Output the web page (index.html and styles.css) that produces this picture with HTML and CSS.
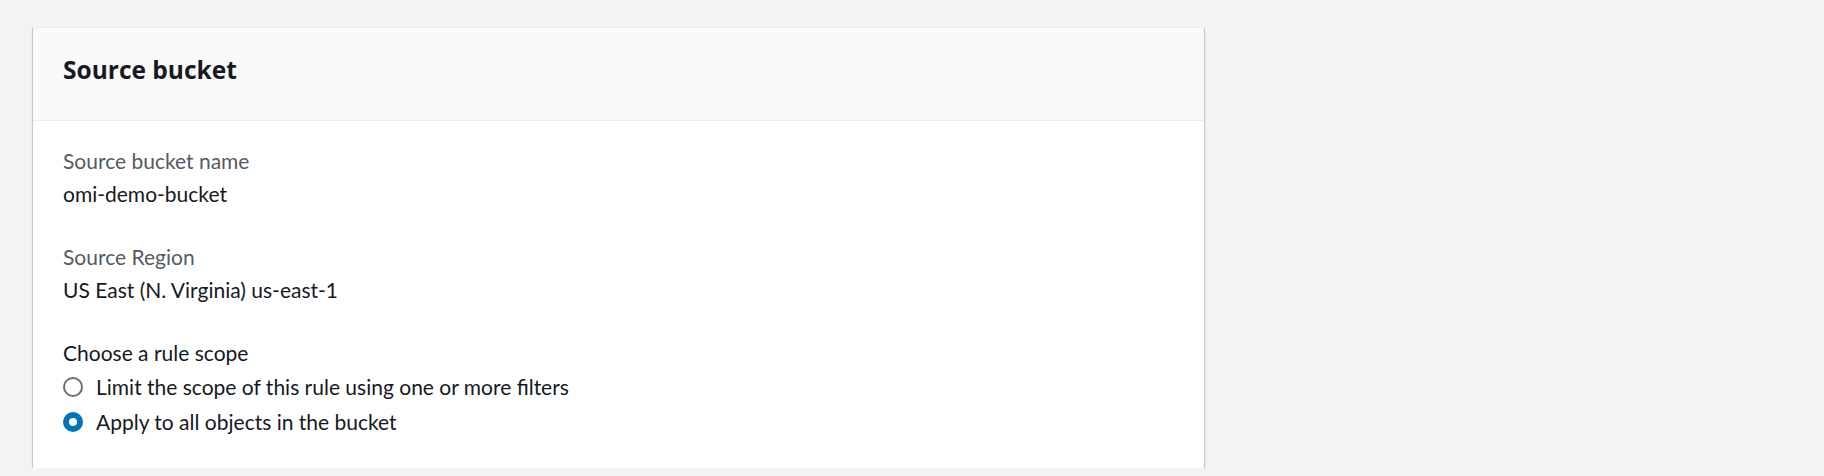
FILE: index.html
```html
<!DOCTYPE html>
<html lang="en">
<head>
<meta charset="utf-8">
<title>Source bucket</title>
<link rel="stylesheet" href="styles.css">
</head>
<body>
<main class="page">
  <section class="card">
    <header class="card-header">
      <h2 class="card-title">Source bucket</h2>
    </header>
    <div class="card-body">
      <div class="field">
        <div class="field-label">Source bucket name</div>
        <div class="field-value">omi-demo-bucket</div>
      </div>
      <div class="field">
        <div class="field-label">Source Region</div>
        <div class="field-value">US East (N. Virginia) us-east-1</div>
      </div>
      <fieldset class="scope">
        <legend class="scope-label">Choose a rule scope</legend>
        <label class="radio-row">
          <span class="radio"></span>
          <span class="radio-text">Limit the scope of this rule using one or more filters</span>
        </label>
        <label class="radio-row">
          <span class="radio radio-checked"></span>
          <span class="radio-text">Apply to all objects in the bucket</span>
        </label>
      </fieldset>
    </div>
  </section>
</main>
</body>
</html>
```

FILE: styles.css
```css
html, body {
  margin: 0;
  padding: 0;
  background: #f2f3f3;
}

body {
  font-family: "Lato", "Open Sans", sans-serif;
  color: #16191f;
}

.page {
  padding: 27px 0 0 33px;
}

.card {
  width: 1171px;
  background: #ffffff;
  box-shadow: 0 1px 1px 0 rgba(0, 28, 36, 0.3), 1px 1px 1px 0 rgba(0, 28, 36, 0.15), -1px 1px 1px 0 rgba(0, 28, 36, 0.15);
  border-top: 1px solid #eaeded;
}

.card-header {
  background: #fafafa;
  border-bottom: 1px solid #eaeded;
  padding: 27px 30px 35px 30px;
}

.card-title {
  margin: 0;
  font-family: "Open Sans", "Lato", sans-serif;
  font-size: 24.5px;
  line-height: 30px;
  font-weight: 700;
  color: #16191f;
}

.card-body {
  padding: 23px 30px 29px 30px;
  display: flex;
  flex-direction: column;
  gap: 29px;
}

.field-label {
  font-size: 21px;
  line-height: 33px;
  color: #545b64;
}

.field-value {
  font-size: 21px;
  line-height: 34px;
  color: #16191f;
}

.scope {
  border: 0;
  margin: 0;
  padding: 0;
  min-width: 0;
  display: flex;
  flex-direction: column;
}

.scope-label {
  padding: 0;
  font-size: 21px;
  line-height: 33px;
  color: #16191f;
  float: left;
  width: 100%;
}

.radio-row {
  display: flex;
  align-items: center;
  gap: 13px;
  height: 35px;
  font-size: 21px;
  color: #16191f;
}

.radio {
  box-sizing: border-box;
  width: 20px;
  height: 20px;
  border-radius: 50%;
  border: 2px solid #687078;
  background: #ffffff;
  flex: none;
}

.radio-checked {
  border: 6px solid #0073bb;
}
```
